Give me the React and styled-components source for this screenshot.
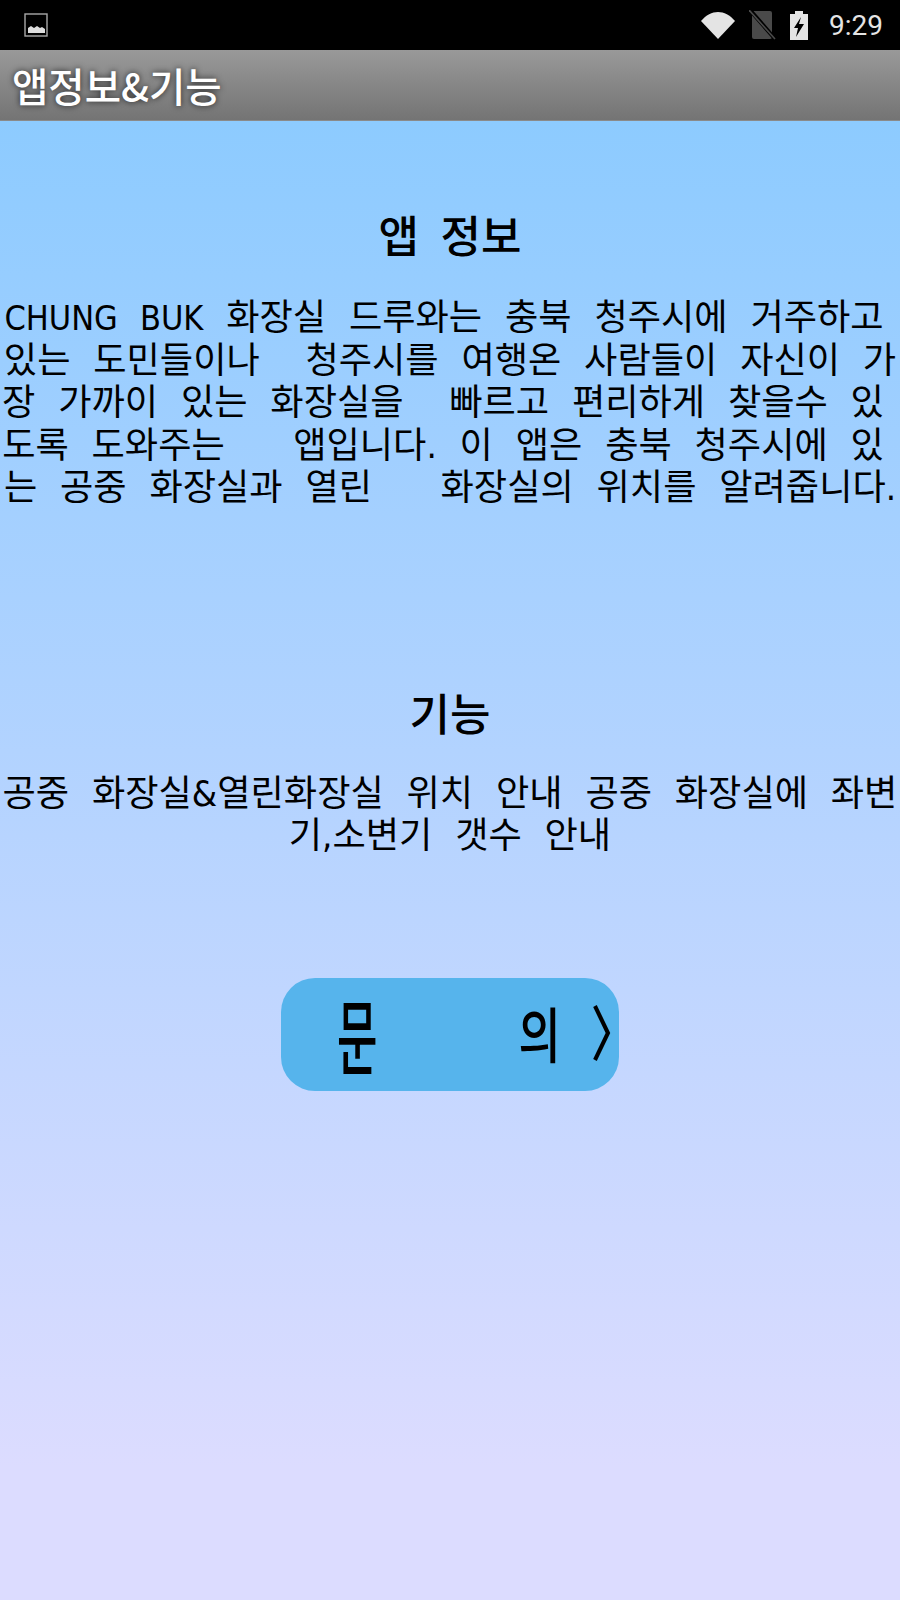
import React from 'react';
import styled, { createGlobalStyle } from 'styled-components';

const GlobalStyle = createGlobalStyle`
  html, body {
    margin: 0;
    padding: 0;
    background: #dcdcff;
  }
  body {
    font-family: "DejaVu Sans Condensed", "DejaVu Sans", "Noto Sans CJK KR", sans-serif;
  }
`;

const Screen = styled.div`
  width: 900px;
  height: 1600px;
  display: flex;
  flex-direction: column;
  overflow: hidden;
`;

const StatusBar = styled.div`
  flex: 0 0 50px;
  display: flex;
  align-items: center;
  padding: 0 17px 0 24px;
  background: #000;
`;

const StatusRight = styled.div`
  margin-left: auto;
  display: flex;
  align-items: center;
  gap: 14px;
`;

const Clock = styled.span`
  margin-left: 7px;
  color: #e4e4e4;
  font-family: Roboto, sans-serif;
  font-size: 28px;
`;

const TitleBar = styled.div`
  flex: 0 0 71px;
  box-sizing: border-box;
  display: flex;
  align-items: center;
  padding: 0 0 2px 12px;
  background: linear-gradient(#999999, #747474);
  border-bottom: 1px solid #8a8a8a;
`;

const Title = styled.h1`
  margin: 0;
  color: #fff;
  font-family: "Noto Sans CJK KR", sans-serif;
  font-size: 39.5px;
  font-weight: 500;
  text-shadow: 0 0 6px rgba(0, 0, 0, 0.75);
`;

const Content = styled.main`
  flex: 1;
  display: flex;
  flex-direction: column;
  align-items: center;
  background: linear-gradient(#8dcbff, #dcdcff 91%);
`;

const Section = styled.section`
  width: 100%;
  margin-top: ${(p) => p.$top}px;
`;

const Heading = styled.h2`
  margin: 0 0 ${(p) => p.$gap}px;
  color: #000;
  font-size: 44px;
  line-height: 48px;
  font-weight: 500;
  text-align: center;
  word-spacing: 9px;
`;

const Line = styled.div`
  box-sizing: border-box;
  height: 42.5px;
  padding-right: ${(p) => p.$pad || 0}px;
  line-height: 42.5px;
  color: #000;
  font-size: 36.2px;
  white-space: pre;
  overflow: hidden;
  display: flex;
  justify-content: center;
  word-spacing: 12.5px;
`;

const Latin = styled.span`
  font-size: 34px;
`;

const ContactButton = styled.button`
  width: 338px;
  height: 113px;
  margin-top: 120px;
  padding: 0;
  border: 0;
  border-radius: 34px;
  background: #56b4ec;
  color: #000;
  font-family: "Noto Sans CJK KR", sans-serif;
  display: flex;
  align-items: center;
`;

const ButtonChar = styled.span`
  flex: none;
  display: inline-block;
  margin-left: ${(p) => p.$left}px;
  font-size: ${(p) => p.$size}px;
  font-weight: 500;
  line-height: 1;
  transform: translateY(${(p) => p.$shift}px) scaleY(${(p) => p.$stretch});
`;

const IconSlot = styled.span`
  display: flex;
`;

const about = [
  { pad: 12, text: <><Latin>CHUNG BUK</Latin> 화장실 드루와는 충북 청주시에 거주하고</> },
  { pad: 0, text: '있는 도민들이나  청주시를 여행온 사람들이 자신이 가' },
  { pad: 14, text: '장 가까이 있는 화장실을  빠르고 편리하게 찾을수 있' },
  { pad: 14, text: '도록 도와주는   앱입니다. 이 앱은 충북 청주시에 있' },
  { pad: 0, text: '는 공중 화장실과 열린   화장실의 위치를 알려줍니다.' },
];

const features = [
  '공중 화장실&열린화장실 위치 안내 공중 화장실에 좌변',
  '기,소변기 갯수 안내',
];

const ImageIcon = () => (
  <svg width="24" height="24" viewBox="0 0 24 24">
    <rect x="1" y="1" width="22" height="22" fill="none" stroke="#a8a8a8" strokeWidth="1.4" />
    <path d="M4 20v-5l3-2 3 2 3-2 3 2 2-1 3 2v4z" fill="#dedede" />
  </svg>
);

const WifiIcon = () => (
  <svg width="34" height="28" viewBox="0 0 34 28">
    <path d="M0 10C5 4 11 1 17 1s12 3 17 9L17 28z" fill="#e4e4e4" />
  </svg>
);

const NoSimIcon = () => (
  <svg width="27" height="30" viewBox="0 0 27 30">
    <path d="M3 3q0-2 2-2h16q2 0 2 2v24q0 2-2 2H5q-2 0-2-2z" fill="#4a4a4a" />
    <path d="M1 0l26 30" stroke="#000" strokeWidth="4" />
    <path d="M0 0l26 29" stroke="#4a4a4a" strokeWidth="1.6" />
  </svg>
);

const BatteryIcon = () => (
  <svg width="18" height="29" viewBox="0 0 18 29">
    <path d="M5 0h8v3h5v26H0V3h5z" fill="#e4e4e4" />
    <path d="M11 6L4 17h4l-2 9 8-13H9z" fill="#000" />
  </svg>
);

const App = () => (
  <Screen>
    <GlobalStyle />
    <StatusBar>
      <IconSlot>
        <ImageIcon />
      </IconSlot>
      <StatusRight>
        <WifiIcon />
        <NoSimIcon />
        <BatteryIcon />
        <Clock>9:29</Clock>
      </StatusRight>
    </StatusBar>
    <TitleBar>
      <Title>앱정보&기능</Title>
    </TitleBar>
    <Content>
      <Section $top={93}>
        <Heading $gap={35}>앱 정보</Heading>
        {about.map((line, i) => (
          <Line key={i} $pad={line.pad}>{line.text}</Line>
        ))}
      </Section>
      <Section $top={182}>
        <Heading $gap={33}>기능</Heading>
        {features.map((line) => (
          <Line key={line}>{line}</Line>
        ))}
      </Section>
      <ContactButton>
        <ButtonChar $left={56} $size={44} $stretch={1.85} $shift={-1}>문</ButtonChar>
        <ButtonChar $left={141} $size={46} $stretch={1.3} $shift={-2}>의</ButtonChar>
        <ButtonChar $left={30} $size={46} $stretch={1.3} $shift={-4}>〉</ButtonChar>
      </ContactButton>
    </Content>
  </Screen>
);

export default App;
